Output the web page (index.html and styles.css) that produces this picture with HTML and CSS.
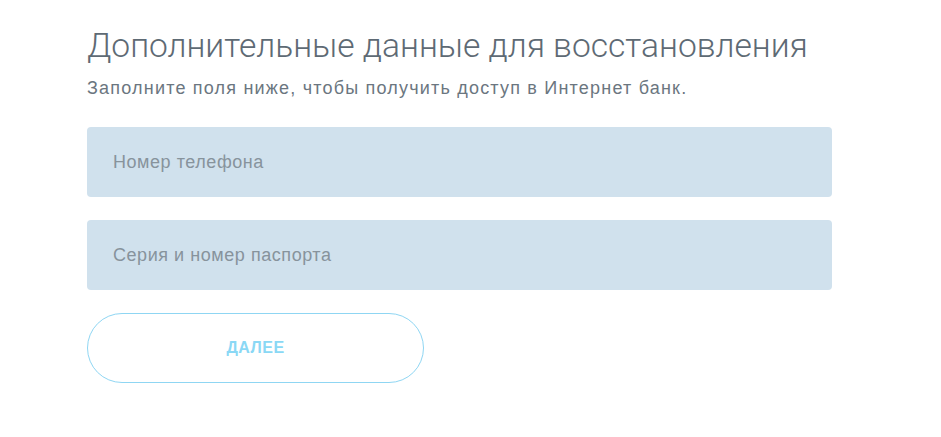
FILE: index.html
```html
<!DOCTYPE html>
<html lang="ru">
<head>
    <meta charset="UTF-8" />
    <title>Восстановление доступа</title>
    <link rel="stylesheet" href="styles.css">
</head>
<body>
    <div class="recovery">
        <h1>Дополнительные данные для восстановления</h1>
        <p class="hint">Заполните поля ниже, чтобы получить доступ в Интернет банк.</p>
        <form class="form">
            <input type="text" class="field" placeholder="Номер телефона" />
            <input type="text" class="field" placeholder="Серия и номер паспорта" />
            <button type="button" class="next-btn">ДАЛЕЕ</button>
        </form>
    </div>
</body>
</html>
```

FILE: styles.css
```css
* {
    box-sizing: border-box;
}
body {
    margin: 0;
    background: #fff;
    font-family: 'Liberation Sans', Arial, sans-serif;
}
.recovery {
    width: 745px;
    margin-left: 87px;
    padding-top: 26px;
}
h1 {
    margin: 0;
    font-family: Roboto, 'Liberation Sans', sans-serif;
    font-size: 33.6px;
    font-weight: 300;
    line-height: 40px;
    color: #5e6a74;
    white-space: nowrap;
}
.hint {
    margin: 10px 0 0;
    font-size: 18px;
    line-height: 24px;
    letter-spacing: 1.2px;
    color: #6b7680;
}
.form {
    margin-top: 27px;
    display: flex;
    flex-direction: column;
    gap: 23px;
}
.field {
    width: 100%;
    height: 70px;
    border: none;
    border-radius: 4px;
    background-color: #d0e1ed;
    padding: 0 26px;
    font-family: inherit;
    font-size: 18px;
    letter-spacing: 0.55px;
    color: #5e6a74;
    outline: none;
}
.field::placeholder {
    color: #87939c;
}
.next-btn {
    width: 337px;
    height: 70px;
    border: 1px solid #8fd6f3;
    border-radius: 35px;
    background: #fff;
    color: #8ad8f5;
    font-family: inherit;
    font-size: 16px;
    font-weight: 700;
    letter-spacing: 0.5px;
    cursor: pointer;
}
```
